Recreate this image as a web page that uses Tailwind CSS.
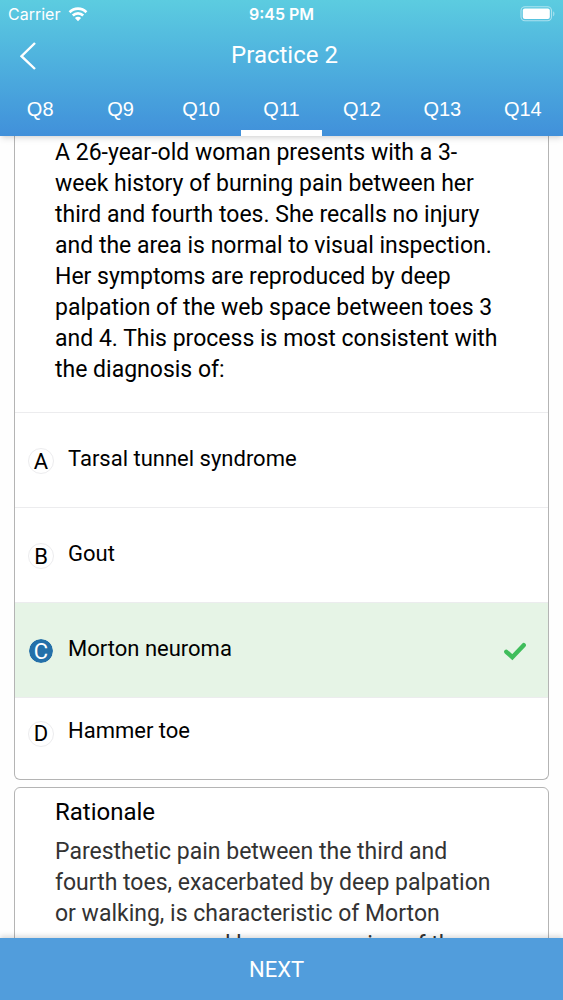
<!DOCTYPE html>
<html lang="en">
<head>
    <meta charset="UTF-8">
    <meta name="viewport" content="width=device-width, initial-scale=1.0">
    <title>Practice 2</title>
    <script src="https://cdn.jsdelivr.net/npm/@tailwindcss/browser@4"></script>
</head>
<body class="h-screen flex flex-col overflow-hidden bg-[#fefefe] font-['Roboto',sans-serif] text-black">
    <header class="relative z-10 shrink-0 bg-linear-to-b from-[#5ccce0] to-[#4190da] text-white shadow-md">
        <!-- Status bar -->
        <div class="grid grid-cols-3 items-center h-7 pl-2 pr-2 font-['Inter',sans-serif] text-base">
            <div class="flex items-center gap-2">
                <span>Carrier</span>
                <svg class="w-5 h-4" viewBox="0 0 20 16" fill="none" stroke="currentColor" stroke-width="2.7">
                    <path d="M1.6 6.2a11.8 11.8 0 0 1 16.8 0"/>
                    <path d="M4.8 9.5a7.4 7.4 0 0 1 10.4 0"/>
                    <path d="M10 15.2 6.9 12a4.4 4.4 0 0 1 6.2 0z" fill="currentColor" stroke="none"/>
                </svg>
            </div>
            <span class="text-center font-semibold whitespace-nowrap">9:45 PM</span>
            <svg class="justify-self-end w-[35px] h-4" viewBox="0 0 35 16" fill="none">
                <rect x="1" y=".75" width="30.5" height="14" rx="4" stroke="#fff" stroke-opacity=".5" stroke-width="1.1"/>
                <rect x="2.8" y="2.5" width="27" height="10.5" rx="2" fill="#fff"/>
                <path d="M33.2 5.2c1.6.7 1.6 4.4 0 5.1z" fill="#fff" fill-opacity=".5"/>
            </svg>
        </div>

        <div class="grid grid-cols-[60px_1fr_54px] items-center h-14">
            <button type="button" aria-label="Back" class="flex items-center h-full pl-5">
                <svg class="w-4 h-7" viewBox="0 0 16 28" fill="none" stroke="currentColor" stroke-width="2.4">
                    <path d="M15 1 1.5 14.2 15 27"/>
                </svg>
            </button>
            <h1 class="pb-0.5 text-center text-2xl">Practice 2</h1>
        </div>

        <nav class="grid grid-cols-7 h-[52px] font-['Liberation_Sans',sans-serif] text-xl leading-[42px] text-center">
            <a href="#q8" class="pt-1">Q8</a>
            <a href="#q9" class="pt-1">Q9</a>
            <a href="#q10" class="pt-1">Q10</a>
            <a href="#q11" aria-current="page" class="pt-1 border-b-6 border-white">Q11</a>
            <a href="#q12" class="pt-1">Q12</a>
            <a href="#q13" class="pt-1">Q13</a>
            <a href="#q14" class="pt-1">Q14</a>
        </nav>
    </header>

    <main class="flex-1 min-h-0 overflow-y-auto [scrollbar-width:none] px-[14px]">
        <fieldset class="min-w-0 bg-white border border-t-0 border-[#b4b4b4] rounded-b-md overflow-hidden">
            <p class="pl-10 pr-10 pt-px pb-[27px] text-[23px] leading-[31px]">A 26-year-old woman presents with a 3-week history of burning pain between her third and fourth toes. She recalls no injury and the area is normal to visual inspection. Her symptoms are reproduced by deep palpation of the web space between toes 3 and 4. This process is most consistent with the diagnosis of:</p>

            <label class="relative flex items-center h-[95px] pt-0.5 pl-[13px] pr-[21px] border-t border-[#ececee]">
                <input type="radio" name="answer" class="sr-only">
                <span class="flex items-center justify-center size-[26px] mr-[14px] rounded-full border border-[#ececee] text-[22px]">A</span>
                <span class="flex-1 pb-1.5 text-[22px]">Tarsal tunnel syndrome</span>
            </label>
            <label class="relative flex items-center h-[95px] pt-0.5 pl-[13px] pr-[21px] border-t border-[#ececee]">
                <input type="radio" name="answer" class="sr-only">
                <span class="flex items-center justify-center size-[26px] mr-[14px] rounded-full border border-[#ececee] text-[22px]">B</span>
                <span class="flex-1 pb-1.5 text-[22px]">Gout</span>
            </label>
            <label class="relative flex items-center h-[95px] pt-0.5 pl-[13px] pr-[21px] border-t border-[#ececee] bg-[#e6f4e6]">
                <input type="radio" name="answer" class="sr-only" checked>
                <span class="flex items-center justify-center size-[26px] mr-[14px] rounded-full border border-[#e6f4e6] bg-[#2470a9] bg-clip-padding text-[22px] text-white">C</span>
                <span class="flex-1 pb-1.5 text-[22px]">Morton neuroma</span>
                <svg class="w-6 h-5" viewBox="0 0 24 20" fill="none" stroke="#3fbd5b" stroke-width="4.4" stroke-linecap="round">
                    <path d="M3.3 10.8 9.3 16.2 20.7 4.2"/>
                </svg>
            </label>
            <label class="relative flex items-center h-[82px] pt-0.5 pl-[13px] pr-[21px] pb-3 border-t border-[#ececee]">
                <input type="radio" name="answer" class="sr-only">
                <span class="flex items-center justify-center size-[26px] mr-[14px] rounded-full border border-[#ececee] text-[22px]">D</span>
                <span class="flex-1 pb-1.5 text-[22px]">Hammer toe</span>
            </label>
        </fieldset>

        <section class="mt-[7px] px-10 pt-2 bg-white border border-[#b4b4b4] rounded-md text-[23px] leading-[31px]">
            <h2 class="text-2xl">Rationale</h2>
            <p class="pt-2 text-[#333]">Paresthetic pain between the third and fourth toes, exacerbated by deep palpation or walking, is characteristic of Morton neuroma, caused by compression of the</p>
        </section>
    </main>

    <button type="button" class="relative z-10 shrink-0 h-[62px] pr-2.5 bg-[#519ddc] text-[22px] text-white shadow-[0_-2px_5px_rgba(0,0,0,0.15)]">NEXT</button>
</body>
</html>
